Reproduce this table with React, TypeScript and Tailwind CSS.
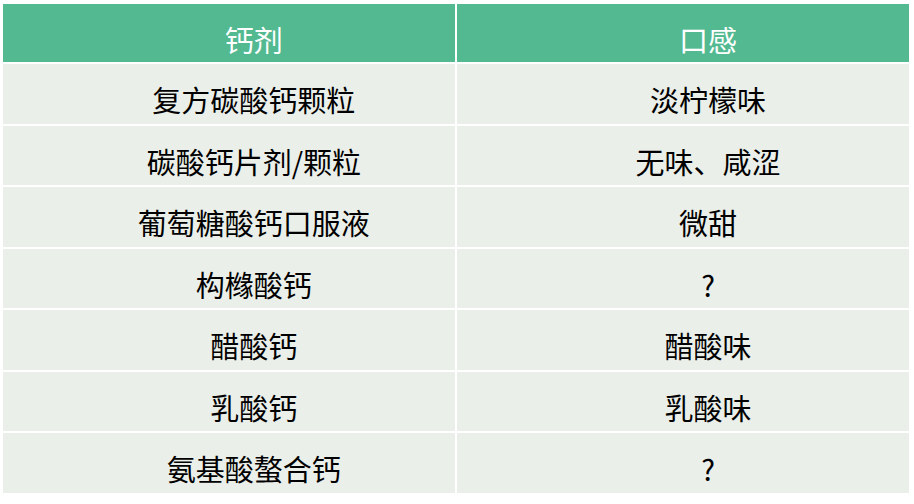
import { Fragment } from "react"

const rows: [string, string][] = [
  ["复方碳酸钙颗粒", "淡柠檬味"],
  ["碳酸钙片剂/颗粒", "无味、咸涩"],
  ["葡萄糖酸钙口服液", "微甜"],
  ["构橼酸钙", "?"],
  ["醋酸钙", "醋酸味"],
  ["乳酸钙", "乳酸味"],
  ["氨基酸螯合钙", "?"],
]

function Cell({ children, header }: { children: React.ReactNode; header?: boolean }) {
  return (
    <div
      className={
        header
          ? "flex h-[58px] items-center justify-center bg-[#52b991] pl-[50px] pt-[12px] text-white"
          : "flex h-[59.5px] items-center justify-center bg-[#ebefe9] pl-[50px] pt-[12px] text-black"
      }
    >
      {children}
    </div>
  )
}

export default function App() {
  return (
    <div className="h-[504px] w-[914px] bg-white pl-[3px] pt-[4px]">
      <div
        className="grid w-[906px] grid-cols-2 gap-x-[2.5px] gap-y-[2px] text-[29px] leading-none"
        style={{ fontFamily: '"Noto Sans CJK SC", "Noto Sans", sans-serif' }}
      >
        <Cell header>钙剂</Cell>
        <Cell header>口感</Cell>
        {rows.map(([name, taste]) => (
          <Fragment key={name}>
            <Cell>{name}</Cell>
            <Cell>{taste}</Cell>
          </Fragment>
        ))}
      </div>
    </div>
  )
}
